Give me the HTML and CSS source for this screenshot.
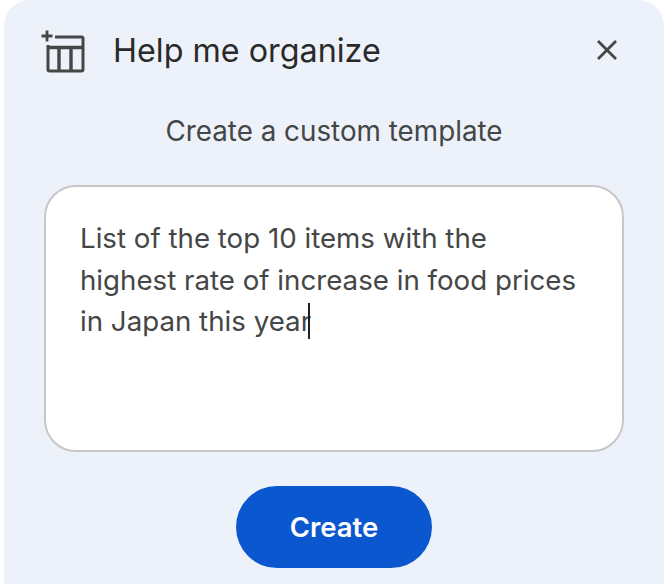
FILE: index.html
```html
<!DOCTYPE html>
<html lang="en">
<head>
  <meta charset="UTF-8" />
  <title>Help me organize</title>
  <link rel="stylesheet" href="styles.css">
</head>
<body>
  <div class="panel">
    <div class="header">
      <svg class="table-icon" width="46" height="46" viewBox="0 0 46 46" fill="none" stroke="#444746" stroke-width="3">
        <path d="M1.500 9H12.500M7 3.500V14.500" stroke-width="2.800"/>
        <path d="M15 10H41.500a1.500 1.500 0 0 1 1.500 1.500V42.500a1.500 1.500 0 0 1-1.500 1.500H9.500a1.500 1.500 0 0 1-1.500-1.500V18"/>
        <path d="M8 20.500H43M19 20.500V44M31 20.500V44" stroke-width="3.400"/>
      </svg>
      <div class="title">Help me organize</div>
      <svg class="close-icon" width="22" height="22" viewBox="0 0 22 22" fill="none" stroke="#444746" stroke-width="2.800">
        <path d="M2 2L20 20M20 2L2 20"/>
      </svg>
    </div>

    <div class="subtitle">Create a custom template</div>

    <div class="prompt-box">
      List of the top 10 items with the<br>
      highest rate of increase in food prices<br>
      in Japan this year<span class="caret"></span>
    </div>

    <div class="actions">
      <button class="create-btn">Create</button>
    </div>
  </div>
</body>
</html>
```

FILE: styles.css
```css
html, body {
  height: 100%;
}
body {
  margin: 0;
  background: white;
  font-family: Inter, Arial, sans-serif;
  overflow: hidden;
}
.panel {
  box-sizing: border-box;
  width: 660px;
  height: 584px;
  margin-left: 4px;
  background: #edf2fa;
  border-radius: 26px 26px 0 0;
  padding: 0 40px;
}
.header {
  display: flex;
  align-items: center;
  height: 100px;
}
.table-icon {
  margin-left: -4px;
  margin-right: 27px;
}
.title {
  flex: 1;
  font-size: 32.300px;
  color: #2a2a2a;
}
.close-icon {
  margin-right: 6px;
}
.subtitle {
  text-align: center;
  font-size: 27.800px;
  color: #444746;
  line-height: 32px;
  margin-top: 15px;
}
.prompt-box {
  box-sizing: border-box;
  height: 267px;
  margin-top: 38px;
  padding: 31px 34px;
  background: white;
  border: 2px solid #c7c7c7;
  border-radius: 32px;
  font-size: 27.700px;
  line-height: 41.500px;
  color: #444746;
}
.caret {
  display: inline-block;
  width: 2px;
  height: 36px;
  margin-left: -3px;
  background: #1f1f1f;
  vertical-align: -8px;
}
.actions {
  display: flex;
  justify-content: center;
  margin-top: 34px;
}
.create-btn {
  width: 196px;
  height: 82px;
  border: none;
  border-radius: 41px;
  background: #0b57d0;
  color: white;
  font-family: Inter, Arial, sans-serif;
  font-size: 27.500px;
  font-weight: 600;
}
```
